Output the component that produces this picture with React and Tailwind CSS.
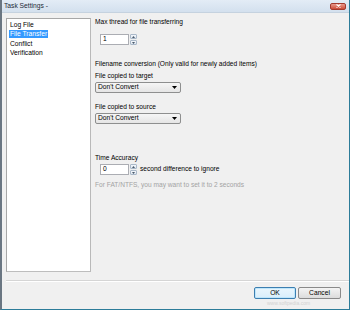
const font = { fontFamily: '"Liberation Sans", Arial, sans-serif' };

// Petit bouton fléché du contrôle numérique
const SpinButton = ({ up }) => (
  <div className="w-[7px] h-[5px] flex items-center justify-center border border-[#a9b8c9] bg-gradient-to-b from-[#f4f7fb] to-[#dde6ef] rounded-[1px]">
    <svg width="3" height="2" viewBox="0 0 3 2">
      <path d={up ? "M0 2 L1.5 0 L3 2 Z" : "M0 0 L1.5 2 L3 0 Z"} fill="#4a5a6c" />
    </svg>
  </div>
);

const Spinner = ({ value }) => (
  <div className="flex items-center gap-[1px]">
    <div className="w-[29px] h-[11px] bg-white border border-[#abadb3] flex items-center pl-[2px] text-[6.7px] leading-none text-black">
      {value}
    </div>
    <div className="flex flex-col gap-[1px]">
      <SpinButton up />
      <SpinButton />
    </div>
  </div>
);

const Dropdown = ({ value }) => (
  <div className="w-[86px] h-[11px] flex items-center justify-between pl-[2px] pr-[3px] border border-[#8e8f8f] rounded-[2px] bg-gradient-to-b from-[#f6f6f6] to-[#e5e5e5] text-[6.7px] leading-none text-black">
    <span>{value}</span>
    <svg width="5" height="3" viewBox="0 0 5 3">
      <path d="M0 0 L5 0 L2.5 3 Z" fill="#000" />
    </svg>
  </div>
);

const Label = ({ children, className = "" }) => (
  <div className={`h-[8px] leading-[8px] text-[6.6px] whitespace-nowrap ${className}`}>
    {children}
  </div>
);

const items = ["Log File", "File Transfer", "Conflict", "Verification"];

export default function App() {
  return (
    <div
      className="w-[350px] h-[310px] bg-[#f0f0f0] flex flex-col border-l-2 border-l-[#6a7682] border-r border-b border-r-[#2c7c99] border-b-[#2c7c99] overflow-hidden"
      style={font}
    >
      {/* Barre de titre */}
      <div className="h-[13px] flex items-center justify-between pl-[2px] pr-[3px] bg-gradient-to-b from-[#e3ecf6] to-[#d3e0ee] border-b border-[#c5d2df]">
        <span className="text-[6.7px] leading-none text-[#1e2a36]">Task Settings -</span>
        <div className="w-[16px] h-[7px] flex items-center justify-center rounded-[2px] border border-[#a23a2e] bg-gradient-to-b from-[#e8998d] to-[#cc4a37]">
          <svg width="5" height="4" viewBox="0 0 5 4">
            <path d="M0.5 0.5 L4.5 3.5 M4.5 0.5 L0.5 3.5" stroke="#fff" strokeWidth="1.1" />
          </svg>
        </div>
      </div>

      {/* Contenu */}
      <div className="flex pt-[5px] pl-[4px] h-[259px]">
        <div className="w-[85px] h-[254px] bg-white border border-[#a7a7a7] border-r-[#b9b9b9] border-b-[#bdbdbd] pt-[1px] pl-[2px]">
          {items.map((it) => (
            <div key={it} className="h-[9.5px] flex items-center">
              <span
                className={`text-[6.7px] leading-[8px] px-[1px] ${
                  it === "File Transfer" ? "bg-[#3399ff] text-white" : "text-black"
                }`}
              >
                {it}
              </span>
            </div>
          ))}
        </div>

        <div className="ml-[4px] flex flex-col text-black">
          <Label>Max thread for file transferring</Label>
          <div className="mt-[8px] ml-[5px]">
            <Spinner value="1" />
          </div>
          <Label className="mt-[15px]">Filename conversion (Only valid for newly added items)</Label>
          <Label className="mt-[4px]">File copied to target</Label>
          <div className="mt-[2px]">
            <Dropdown value="Don't Convert" />
          </div>
          <Label className="mt-[10px]">File copied to source</Label>
          <div className="mt-[2px]">
            <Dropdown value="Don't Convert" />
          </div>
          <Label className="mt-[30px]">Time Accuracy</Label>
          <div className="mt-[2px] ml-[5px] flex items-center gap-[3px]">
            <Spinner value="0" />
            <span className="text-[6.6px] leading-none">second difference to ignore</span>
          </div>
          <Label className="mt-[6px] text-[#a3a3a3]">For FAT/NTFS, you may want to set it to 2 seconds</Label>
        </div>
      </div>

      {/* Séparateur */}
      <div className="ml-[4px] mt-[8px] h-[2px] border-t border-[#d5d5d5] border-b border-b-white" />

      {/* Boutons */}
      <div className="mt-[5px] flex justify-end gap-[2px] pr-[8px]">
        <button className="w-[42px] h-[12px] rounded-[2px] border border-[#3c7fb1] bg-gradient-to-b from-[#eaf6fd] to-[#d9eefb] text-[6.7px] leading-none text-black shadow-[inset_0_0_0_1px_#bfe6fb]">
          OK
        </button>
        <button className="w-[43px] h-[12px] rounded-[2px] border border-[#8a8a8a] bg-gradient-to-b from-[#f4f4f4] to-[#dcdcdc] text-[6.7px] leading-none text-black">
          Cancel
        </button>
      </div>
      <div className="mt-[2px] pl-[265px] text-[5px] leading-none text-[#d2d2d2]">www.softpedia.com</div>
    </div>
  );
}
